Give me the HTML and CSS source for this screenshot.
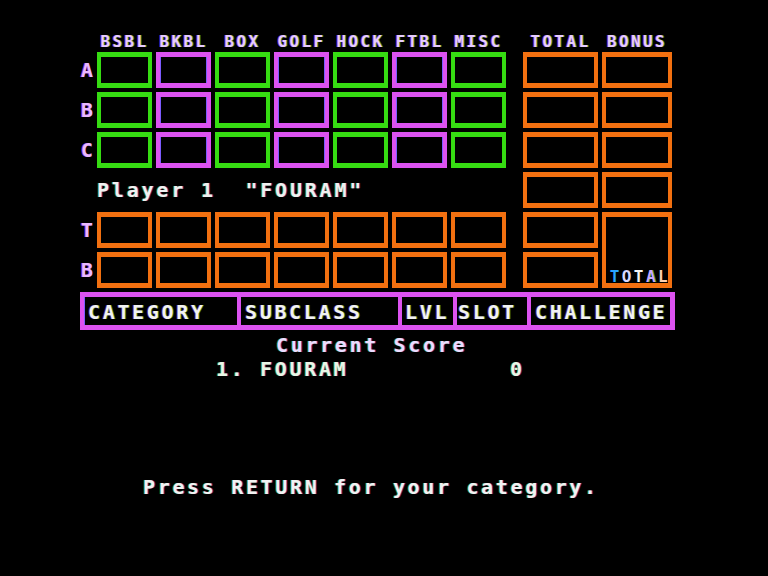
FILE: index.html
```html
<!DOCTYPE html>
<html>
<head>
<meta charset="utf-8">
<title>Sports Trivia Board</title>
<link rel="stylesheet" href="styles.css">
</head>
<body>
<div class="screen">
  <div class="board">
    <div></div>
    <div class="hd">BSBL</div>
    <div class="hd">BKBL</div>
    <div class="hd">BOX</div>
    <div class="hd">GOLF</div>
    <div class="hd">HOCK</div>
    <div class="hd">FTBL</div>
    <div class="hd">MISC</div>
    <div></div>
    <div class="hd">TOTAL</div>
    <div class="hd">BONUS</div>

    <div class="rl">A</div>
    <div class="box g"></div><div class="box m"></div><div class="box g"></div><div class="box m"></div><div class="box g"></div><div class="box m"></div><div class="box g"></div>
    <div></div>
    <div class="box o"></div><div class="box o"></div>

    <div class="rl">B</div>
    <div class="box g"></div><div class="box m"></div><div class="box g"></div><div class="box m"></div><div class="box g"></div><div class="box m"></div><div class="box g"></div>
    <div></div>
    <div class="box o"></div><div class="box o"></div>

    <div class="rl">C</div>
    <div class="box g"></div><div class="box m"></div><div class="box g"></div><div class="box m"></div><div class="box g"></div><div class="box m"></div><div class="box g"></div>
    <div></div>
    <div class="box o"></div><div class="box o"></div>

    <div></div>
    <div class="player">Player 1  "FOURAM"</div>
    <div></div>
    <div class="box o"></div><div class="box o"></div>

    <div class="rl">T</div>
    <div class="box o"></div><div class="box o"></div><div class="box o"></div><div class="box o"></div><div class="box o"></div><div class="box o"></div><div class="box o"></div>
    <div></div>
    <div class="box o"></div>
    <div class="box o big"><span class="tot"><span class="c1">T</span><span class="c2">O</span><span class="c3">T</span><span class="c4">A</span><span class="c5">L</span></span></div>

    <div class="rl">B</div>
    <div class="box o"></div><div class="box o"></div><div class="box o"></div><div class="box o"></div><div class="box o"></div><div class="box o"></div><div class="box o"></div>
    <div></div>
    <div class="box o"></div>
  </div>

  <div class="bar">
    <div class="seg s1">CATEGORY</div>
    <div class="seg s2">SUBCLASS</div>
    <div class="seg s3">LVL</div>
    <div class="seg s4">SLOT</div>
    <div class="seg s5">CHALLENGE</div>
  </div>

  <div class="line cur">Current Score</div>
  <div class="line row1">1. FOURAM           0</div>

  <div class="line prompt">Press RETURN for your category.</div>
</div>
</body>
</html>
```

FILE: styles.css
```css
html, body {
  margin: 0;
  padding: 0;
  background: #000;
}

body {
  width: 768px;
  height: 576px;
  overflow: hidden;
  font-family: "DejaVu Sans Mono", "Liberation Mono", monospace;
  font-weight: bold;
  color: #f2f2f2;
}

.screen {
  padding-top: 35px;
}

.board {
  display: grid;
  margin-left: 80px;
  grid-template-columns: 13px repeat(7, 55px) 9px 75px 70px;
  grid-template-rows: 13px repeat(6, 36px);
  gap: 4px;
}

.hd {
  font-size: 16px;
  line-height: 13px;
  letter-spacing: 2.4px;
  text-align: center;
  white-space: pre;
  color: #e6ccff;
  text-shadow: -1px 0 rgba(200, 70, 255, 0.7), 1px 0 rgba(70, 220, 40, 0.6);
}

.rl {
  align-self: center;
  padding-left: 1px;
  font-size: 20px;
  line-height: 20px;
  color: #e8b8ff;
  text-shadow: -1px 0 rgba(200, 70, 255, 0.8);
}

.box {
  box-sizing: border-box;
  border-style: solid;
  border-width: 5px 4px;
}

.g {
  border-color: #36dc12;
}

.m {
  border-color: #dc52f0;
  box-shadow: inset 1px 0 #7c5cff, inset -1px 0 #7c5cff;
}

.o {
  border-color: #f27010;
}

.big {
  grid-row: span 2;
  display: flex;
  align-items: flex-end;
  justify-content: flex-end;
}

.tot {
  font-size: 16px;
  line-height: 12px;
  letter-spacing: 2.4px;
  margin-right: -2px;
}

.c1 { color: #2aa6ff; }
.c2 { color: #d8d8ff; }
.c3 { color: #f4f4f4; }
.c4 { color: #c8a8ff; text-shadow: 1px 0 rgba(80, 220, 40, 0.7); }
.c5 { color: #ffd0b0; }

.player {
  grid-column: 2 / span 7;
  align-self: center;
  font-size: 20px;
  line-height: 20px;
  letter-spacing: 2.8px;
  white-space: pre;
  color: #f0f0f0;
  text-shadow: -1px 0 rgba(80, 220, 40, 0.5), 1px 0 rgba(200, 70, 255, 0.5);
}

.bar {
  display: flex;
  box-sizing: border-box;
  width: 595px;
  height: 38px;
  margin: 4px 0 0 80px;
  border: 5px solid #dc52f0;
  border-left-width: 4px;
  border-right-width: 5px;
  box-shadow: inset 1px 0 #7c5cff;
}

.seg {
  box-sizing: border-box;
  height: 28px;
  padding: 2px 0 0 4px;
  font-size: 20px;
  line-height: 26px;
  letter-spacing: 2.66px;
  white-space: pre;
  color: #f2f2f2;
  border-left: 4px solid #dc52f0;
  text-shadow: -1px 0 rgba(200, 70, 255, 0.45), 1px 0 rgba(80, 220, 40, 0.55);
}

.s1 { width: 153px; border-left: none; padding-left: 4px; }
.s2 { width: 161px; }
.s3 { width: 55px; padding-left: 3px; }
.s4 { width: 74px; padding-left: 1px; }
.s5 { width: 138px; }

.line {
  font-size: 20px;
  line-height: 20px;
  letter-spacing: 2.66px;
  white-space: pre;
  text-shadow: -1px 0 rgba(80, 220, 40, 0.55), 1px 0 rgba(200, 70, 255, 0.55);
}

.cur {
  margin: 5px 0 0 276px;
  color: #ecdcff;
}

.row1 {
  margin: 3.5px 0 0 216px;
  color: #eaf6e6;
}

.prompt {
  margin: 98.5px 0 0 143px;
  color: #f2f2f2;
}
```
